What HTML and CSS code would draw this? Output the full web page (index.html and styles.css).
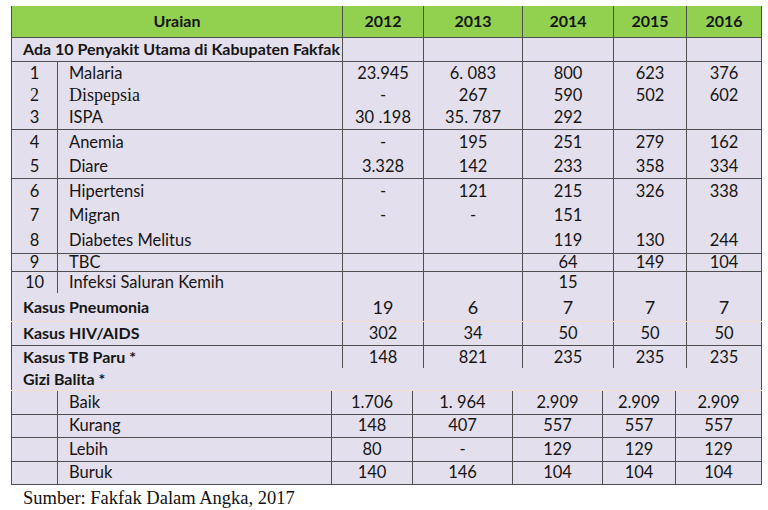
FILE: index.html
```html
<!DOCTYPE html>
<html lang="id">
<head>
<meta charset="utf-8">
<title>Penyakit Utama Fakfak</title>
<link rel="stylesheet" href="styles.css">
</head>
<body>
<div class="page">
  <table class="t main">
    <colgroup>
      <col class="w46"><col class="w285"><col class="w81"><col class="w99"><col class="w91"><col class="w73"><col class="w75">
    </colgroup>
    <thead>
      <tr class="hd">
        <th colspan="2">Uraian</th><th>2012</th><th>2013</th><th>2014</th><th>2015</th><th>2016</th>
      </tr>
    </thead>
    <tbody>
      <tr class="h24 bl">
        <td colspan="2" class="lbl b">Ada 10 Penyakit Utama di Kabupaten Fakfak</td><td></td><td></td><td></td><td></td><td></td>
      </tr>
      <tr class="h23">
        <td>1</td><td class="nm">Malaria</td><td>23.945</td><td>6. 083</td><td>800</td><td>623</td><td>376</td>
      </tr>
      <tr class="h22">
        <td><span class="cam">2</span></td><td class="nm"><span class="cam">Dispepsia</span></td><td>-</td><td>267</td><td>590</td><td>502</td><td>602</td>
      </tr>
      <tr class="h23 bl">
        <td>3</td><td class="nm">ISPA</td><td>30 .198</td><td>35. 787</td><td>292</td><td></td><td></td>
      </tr>
      <tr class="h25">
        <td>4</td><td class="nm">Anemia</td><td>-</td><td>195</td><td>251</td><td>279</td><td>162</td>
      </tr>
      <tr class="h24 bl">
        <td>5</td><td class="nm">Diare</td><td>3.328</td><td>142</td><td>233</td><td>358</td><td>334</td>
      </tr>
      <tr class="h25">
        <td>6</td><td class="nm">Hipertensi</td><td>-</td><td>121</td><td>215</td><td>326</td><td>338</td>
      </tr>
      <tr class="h25">
        <td>7</td><td class="nm">Migran</td><td>-</td><td>-</td><td>151</td><td></td><td></td>
      </tr>
      <tr class="h25 bl">
        <td>8</td><td class="nm">Diabetes Melitus</td><td></td><td></td><td>119</td><td>130</td><td>244</td>
      </tr>
      <tr class="h18 bl">
        <td>9</td><td class="nm">TBC</td><td></td><td></td><td>64</td><td>149</td><td>104</td>
      </tr>
      <tr class="h22">
        <td>10</td><td class="nm">Infeksi Saluran Kemih</td><td></td><td></td><td>15</td><td></td><td></td>
      </tr>
      <tr class="h28 bp big">
        <td colspan="2" class="lbl b">Kasus Pneumonia</td><td>19</td><td>6</td><td>7</td><td>7</td><td>7</td>
      </tr>
      <tr class="h24 bl">
        <td colspan="2" class="lbl b">Kasus HIV/AIDS</td><td>302</td><td>34</td><td>50</td><td>50</td><td>50</td>
      </tr>
      <tr class="h23">
        <td colspan="2" class="lbl b">Kasus TB Paru *</td><td>148</td><td>821</td><td>235</td><td>235</td><td>235</td>
      </tr>
    </tbody>
  </table>
  <table class="t gizi">
    <colgroup>
      <col class="w46"><col class="w274"><col class="w81"><col class="w100"><col class="w90"><col class="w73"><col class="w86">
    </colgroup>
    <tbody>
      <tr class="h22 bp">
        <td colspan="7" class="lbl b">Gizi Balita *</td>
      </tr>
      <tr class="h24 bl">
        <td></td><td class="nm">Baik</td><td>1.706</td><td>1. 964</td><td>2.909</td><td>2.909</td><td>2.909</td>
      </tr>
      <tr class="h23 bl">
        <td></td><td class="nm">Kurang</td><td>148</td><td>407</td><td>557</td><td>557</td><td>557</td>
      </tr>
      <tr class="h24 bl">
        <td></td><td class="nm">Lebih</td><td>80</td><td>-</td><td>129</td><td>129</td><td>129</td>
      </tr>
      <tr class="h23 bl">
        <td></td><td class="nm">Buruk</td><td>140</td><td>146</td><td>104</td><td>104</td><td>104</td>
      </tr>
    </tbody>
  </table>
  <p class="src">Sumber: Fakfak Dalam Angka, 2017</p>
</div>
</body>
</html>
```

FILE: styles.css
```css
* { box-sizing: border-box; }
html, body { margin: 0; background: #ffffff; }
body {
  font-family: Lato, "Open Sans", sans-serif;
  font-size: 16px;
  color: #151515;
}
.page {
  width: 768px;
  padding: 6px 0 0 11px;
}
.t {
  border-collapse: collapse;
  table-layout: fixed;
  width: 750px;
  background: #e4dfec;
}
.t td, .t th {
  padding: 0;
  text-align: center;
  vertical-align: middle;
  line-height: 1;
  white-space: nowrap;
  overflow: hidden;
  font-size: 16.5px;
  border-left: 1px solid #4f4f4f;
  border-right: 1px solid #4f4f4f;
}
.cam {
  font-family: "Liberation Serif", "Times New Roman", serif;
  font-size: 18px;
}
.w46 { width: 46px; }
.w285 { width: 285px; }
.w274 { width: 274px; }
.w81 { width: 81px; }
.w99 { width: 99px; }
.w100 { width: 100px; }
.w91 { width: 91px; }
.w90 { width: 90px; }
.w73 { width: 73px; }
.w75 { width: 75px; }
.w86 { width: 86px; }
.hd th {
  background: #92d050;
  font-weight: 700;
  font-size: 16px;
  height: 31px;
  border-bottom: 1px solid #4f4f4f;
}
.h18 td { height: 18px; }
.h22 td { height: 22px; }
.h23 td { height: 23px; }
.h24 td { height: 24px; }
.h25 td { height: 25px; }
.h28 td { height: 28px; }
.bl td { border-bottom: 1px solid #4f4f4f; }
.bp td { border-bottom: 1px solid #f6dccb; }
.t td.nm { text-align: left; padding-left: 11px; }
.t td.lbl { text-align: left; padding-left: 11px; }
.t td.b { font-weight: 700; font-size: 16px; }
.t .big td { font-size: 18px; }
.t .big td.lbl { font-size: 16px; }
.src {
  margin: 3px 0 0 12px;
  font-family: "Liberation Serif", serif;
  font-size: 18.5px;
  color: #111;
}
```
